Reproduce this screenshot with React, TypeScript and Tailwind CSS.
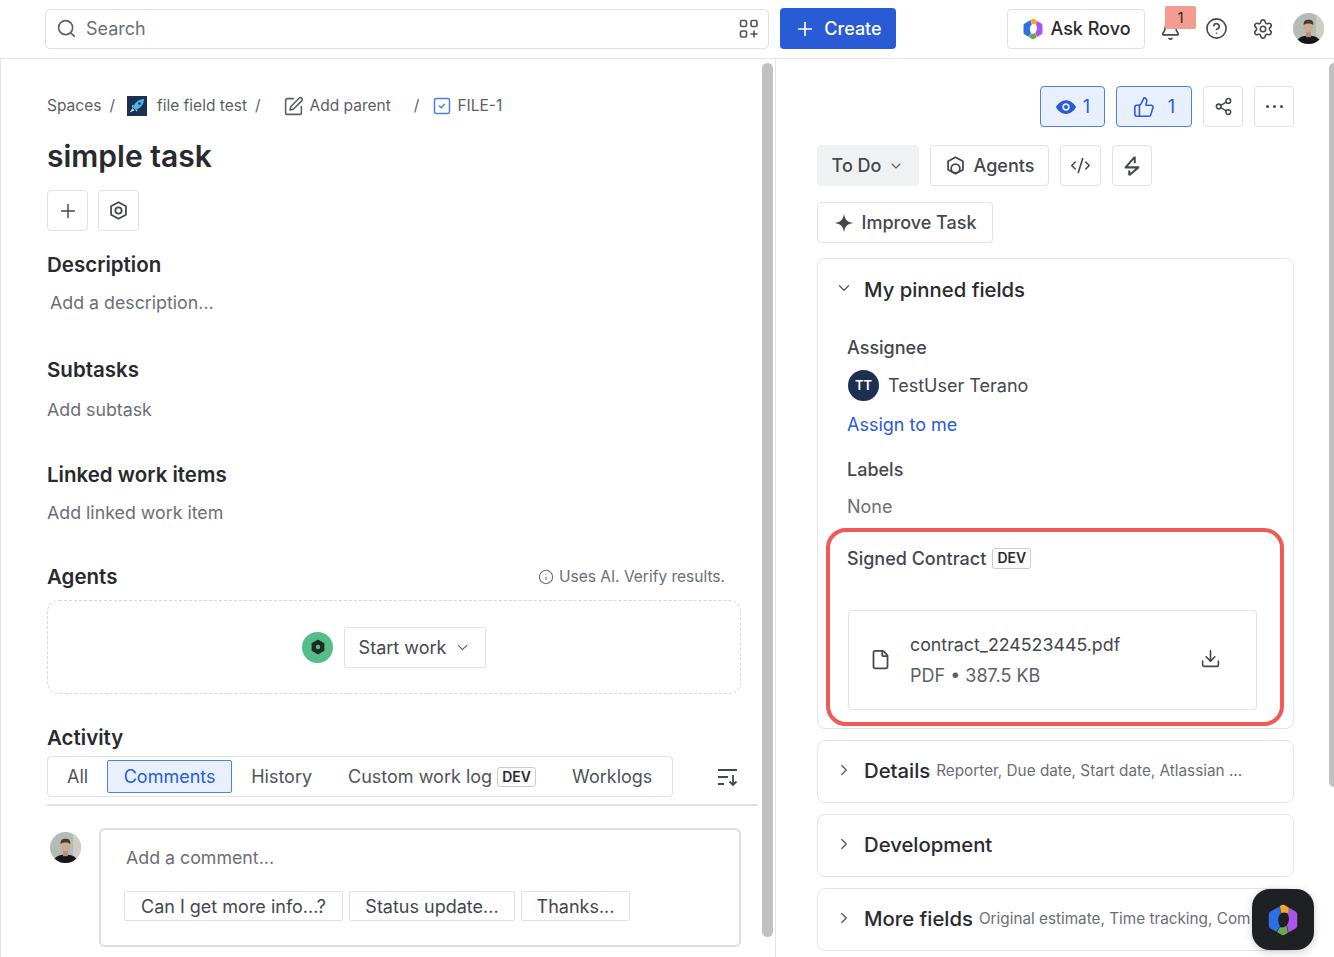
import { Bell, ChevronDown, ChevronRight, CircleHelp, CodeXml, Download, File, Info, Plus, Search, Settings, Share2, SquareCheck, SquarePen, ThumbsUp } from "lucide-react";

const FONT = "font-['Inter','Liberation_Sans',sans-serif]";

function RovoLogo({ size }: { size: number }) {
  return (
    <svg width={size} height={size} viewBox="0 0 24 24">
      <path d="M9.6 3 L3.6 6.4 Q2.5 7 2.5 8.4 V15.6 Q2.5 17 3.6 17.6 L7.6 19.8 L10 16.2 Q8.2 13 9 10 Q9.5 8.5 10.8 7.4Z" fill="#2f6fe4" />
      <path d="M9.8 2.9 L11 2 Q12 1.5 13 2 L15.8 3.6 L16 8 Q13.5 6.4 10.9 7.3Z" fill="#f5a623" />
      <path d="M16.2 3.9 L20.4 6.4 Q21.5 7 21.5 8.4 V15.6 Q21.5 17 20.4 17.6 L15.6 20.3 L14.6 15.2 Q15.8 14 16 11.5 Q16 9.5 15.2 8.2Z" fill="#a855e8" />
      <path d="M8 20 L10 16.6 Q12 17.6 14.3 15.6 L15.3 20.5 L13 21.9 Q12 22.5 11 21.9Z" fill="#6aa84f" />
    </svg>
  );
}

function Avatar({ className }: { className: string }) {
  return (
    <svg className={className} viewBox="0 0 32 32">
      <clipPath id="face-clip">
        <circle cx="16" cy="16" r="16" />
      </clipPath>
      <g clipPath="url(#face-clip)">
        <rect width="32" height="32" fill="#b4bcb8" />
        <rect x="24" width="8" height="32" fill="#cfccc4" />
        <path d="M3 32 C4 25 10 23.5 16 23.5 C22 23.5 28 25 29 32Z" fill="#15171a" />
        <rect x="13.5" y="18" width="5" height="7" fill="#b98f78" />
        <ellipse cx="16" cy="14" rx="4.8" ry="6" fill="#cfa892" />
        <path d="M11 12.5 C10.5 8 13 7 16 7 C19 7 21.5 8 21 12.5 C19.5 10.3 12.5 10.3 11 12.5Z" fill="#4a3b31" />
      </g>
    </svg>
  );
}

function AgentHex({ className }: { className: string }) {
  return (
    <svg className={className} viewBox="0 0 24 24" fill="none" stroke="currentColor" strokeWidth="2">
      <path d="M12 2.5 L20.5 7.2 V16.8 L12 21.5 L3.5 16.8 V7.2Z" strokeLinejoin="round" />
      <circle cx="12" cy="12" r="3.6" />
    </svg>
  );
}

function AgentsGlyph({ className }: { className: string }) {
  return (
    <svg className={className} viewBox="0 0 24 24" fill="none" stroke="currentColor" strokeWidth="2">
      <path d="M12 2.5 L20.5 7.2 V16.8 L12 21.5 L3.5 16.8 V7.2Z" strokeLinejoin="round" />
      <circle cx="12" cy="15.5" r="5" />
    </svg>
  );
}

function DevBadge({ className }: { className: string }) {
  return (
    <span className={`inline-flex items-center justify-center rounded-[3px] border border-[#c9cbd0] text-[14px] font-semibold leading-none text-[#292a2e] ${className}`}>
      DEV
    </span>
  );
}

function IconBox({ className, children }: { className: string; children: React.ReactNode }) {
  return <div className={`flex items-center justify-center rounded-[4px] border border-[#dfe1e4] bg-white text-[#44474e] ${className}`}>{children}</div>;
}

function CollapsedCard({ title, note, className }: { title: string; note?: string; className: string }) {
  return (
    <div className={`flex h-[63px] items-center overflow-hidden rounded-[8px] border border-[#e3e4e7] pl-[17px] ${className}`}>
      <ChevronRight className="mb-1 h-[18px] w-[18px] shrink-0 text-[#50535a]" strokeWidth={1.6} />
      <span className="ml-[11px] shrink-0 text-[20.3px] font-medium text-[#292a2e]">{title}</span>
      {note && <span className="ml-[6px] whitespace-nowrap text-[15.3px] text-[#6b6e76]">{note}</span>}
    </div>
  );
}

function Header() {
  return (
    <header className="flex h-[59px] items-center border-b border-[#e3e4e7] pb-[1px] pl-[45px] pr-[10px]">
      <div className="flex h-[40px] w-[724px] items-center rounded-[5px] border border-[#dfe1e4] pl-[10px] pr-[9px]">
        <Search className="h-[21px] w-[21px] text-[#5c5f66]" strokeWidth={1.8} />
        <span className="ml-[9px] text-[18px] text-[#6b6e76]">Search</span>
        <svg className="ml-auto h-[20px] w-[20px] text-[#50535a]" viewBox="0 0 20 20" fill="none" stroke="currentColor" strokeWidth="1.6">
          <rect x="1.5" y="1.5" width="6" height="6" rx="1.5" />
          <rect x="12" y="1.5" width="6" height="6" rx="1.5" />
          <rect x="1.5" y="12" width="6" height="6" rx="1.5" />
          <path d="M15 11.5v7M11.5 15h7" />
        </svg>
      </div>
      <div className="ml-[11px] flex h-[41px] w-[116px] items-center justify-center gap-[8px] rounded-[4px] bg-[#2a5bd7] text-[18px] font-medium text-white">
        <Plus className="h-[22px] w-[22px]" strokeWidth={1.8} />
        Create
      </div>
      <div className="ml-[111px] flex h-[40px] w-[138px] items-center justify-center gap-[5px] rounded-[4px] border border-[#dfe1e4] text-[18px] font-medium text-[#292a2e]">
        <RovoLogo size={24} />
        Ask Rovo
      </div>
      <div className="relative ml-[13px] flex h-[40px] w-[24px] items-center justify-center">
        <Bell className="mt-[3px] h-[21px] w-[21px] text-[#44474e]" strokeWidth={1.8} />
        <span className="absolute left-[7px] top-[-3px] flex h-[23px] w-[31px] items-center justify-center rounded-[2px] bg-[#f59c91] text-[15px] leading-none text-[#292a2e]">1</span>
      </div>
      <CircleHelp className="ml-[23px] h-[23px] w-[23px] text-[#44474e]" strokeWidth={1.7} />
      <Settings className="ml-[24px] h-[22px] w-[22px] text-[#44474e]" strokeWidth={1.7} />
      <Avatar className="ml-[19px] h-[31px] w-[31px]" />
    </header>
  );
}

function Section({ title, action, className }: { title: string; action: string; className: string }) {
  return (
    <>
      <h2 className={`h-[28px] text-[20.5px] font-semibold leading-[28px] text-[#292a2e] ${className}`}>{title}</h2>
      <p className="text-[17.8px] leading-[26px] text-[#6b6e76]">{action}</p>
    </>
  );
}

function TaskPanel() {
  return (
    <main className="relative h-[898px] w-[775px] shrink-0 overflow-hidden border-l border-[#e3e4e7] pl-[46px] pt-[34px]">
      <div className="flex h-[26px] items-center text-[15.5px] text-[#5c5f66]">
        <span>Spaces</span>
        <span className="ml-[8px]">/</span>
        <svg className="ml-[12px] h-[20px] w-[20px]" viewBox="0 0 20 20">
          <rect width="20" height="20" fill="#1d2f52" />
          <path d="M17 3 C12 3 7.5 6.5 6 11.5 L8.5 14 C13.5 12.5 17 8 17 3Z" fill="#4fb4e8" />
          <circle cx="12.5" cy="7.5" r="1.3" fill="#1d2f52" />
          <path d="M5.5 12 L2.5 16.5 L7.5 14.5Z M5 9.5 L7 9 L5.5 12Z M10.5 13.5 L10 15.5 L8.5 14.5Z" fill="#a9e1f7" />
        </svg>
        <span className="ml-[10px]">file field test</span>
        <span className="ml-[8px]">/</span>
        <SquarePen className="ml-[22px] h-[21px] w-[21px]" strokeWidth={1.8} />
        <span className="ml-[6px]">Add parent</span>
        <span className="ml-[23px]">/</span>
        <SquareCheck className="ml-[13px] h-[20px] w-[20px] text-[#4c7fe8]" strokeWidth={1.8} />
        <span className="ml-[5px]">FILE-1</span>
      </div>
      <h1 className="mt-[17px] h-[40px] text-[30px] font-semibold leading-[40px] text-[#292a2e]">simple task</h1>
      <div className="mt-[14px] flex gap-[10px]">
        <IconBox className="h-[41px] w-[41px]">
          <Plus className="h-[22px] w-[22px]" strokeWidth={1.6} />
        </IconBox>
        <IconBox className="h-[41px] w-[41px]">
          <AgentHex className="h-[21px] w-[21px]" />
        </IconBox>
      </div>
      <h2 className="mt-[20px] h-[28px] text-[20.5px] font-semibold leading-[28px] text-[#292a2e]">Description</h2>
      <p className="ml-[3px] mt-[11px] text-[17.8px] leading-[26px] text-[#6b6e76]">Add a description...</p>
      <div className="mt-[40px]">
        <Section title="Subtasks" action="Add subtask" className="mb-[13px]" />
      </div>
      <div className="mt-[38px]">
        <Section title="Linked work items" action="Add linked work item" className="mb-[11px]" />
      </div>
      <div className="mr-[34px] mt-[37px] flex h-[28px] items-center justify-between pr-[16px]">
        <h2 className="text-[20.5px] font-semibold text-[#292a2e]">Agents</h2>
        <span className="flex items-center gap-[5px] text-[15.5px] text-[#6b6e76]">
          <Info className="h-[16px] w-[16px]" strokeWidth={1.6} />
          Uses AI. Verify results.
        </span>
      </div>
      <div className="mr-[34px] mt-[9px] flex h-[94px] items-center justify-center gap-[11px] rounded-[12px] border border-dashed border-[#d4d6da]">
        <span className="flex h-[31px] w-[31px] items-center justify-center rounded-full bg-[#55bd8a] text-[#1f2a26]">
          <svg className="h-[18px] w-[18px]" viewBox="0 0 24 24" fill="currentColor" fillRule="evenodd">
            <path d="M12 2 L20.5 7 V17 L12 22 L3.5 17 V7Z M12 9 A3 3 0 1 0 12 15 A3 3 0 1 0 12 9Z" />
          </svg>
        </span>
        <div className="flex h-[41px] w-[142px] items-center justify-center gap-[8px] rounded-[3px] border border-[#dfe1e4] text-[18px] text-[#44474e]">
          Start work
          <ChevronDown className="h-[17px] w-[17px] text-[#5c5f66]" strokeWidth={1.6} />
        </div>
      </div>
      <h2 className="mt-[30px] h-[28px] text-[20.5px] font-semibold leading-[28px] text-[#292a2e]">Activity</h2>
      <div className="mt-[4px] flex items-center pr-[36px]">
        <div className="flex h-[41px] w-[626px] items-center rounded-[4px] border border-[#dfe1e4] pl-[4px] text-[18px] text-[#50535a]">
          <span className="ml-[15px]">All</span>
          <span className="ml-[19px] flex h-[33px] w-[125px] items-center justify-center rounded-[2px] border border-[#4c7fe8] bg-[#e9f0fd] text-[#2a5bd7]">Comments</span>
          <span className="ml-[19px]">History</span>
          <span className="ml-[36px]">Custom work log</span>
          <DevBadge className="ml-[5px] h-[20px] w-[39px]" />
          <span className="ml-[36px]">Worklogs</span>
        </div>
        <svg className="ml-[44px] h-[20px] w-[22px] text-[#44474e]" viewBox="0 0 22 20" fill="none" stroke="currentColor" strokeWidth="1.8">
          <path d="M1 3h19M1 10h10M1 17h6M16 8v10M12.5 14.5 16 18l3.5-3.5" />
        </svg>
      </div>
      <div className="mt-[7px] h-[2px] w-[711px] bg-[#dfe1e4]" />
      <div className="mr-[34px] mt-[22px] flex items-start">
        <Avatar className="ml-[3px] mt-[4px] h-[31px] w-[31px] shrink-0" />
        <div className="ml-[18px] h-[119px] grow rounded-[6px] border-2 border-[#dcdee1] pl-[25px] pt-[15px]">
          <p className="text-[17.8px] leading-[26px] text-[#6b6e76]">Add a comment...</p>
          <div className="ml-[-2px] mt-[20px] flex gap-[6px] text-[18px] text-[#44474e]">
            <span className="flex h-[30px] w-[219px] items-center justify-center rounded-[2px] border border-[#dfe1e4]">Can I get more info...?</span>
            <span className="flex h-[30px] w-[166px] items-center justify-center rounded-[2px] border border-[#dfe1e4]">Status update...</span>
            <span className="flex h-[30px] w-[109px] items-center justify-center rounded-[2px] border border-[#dfe1e4]">Thanks...</span>
          </div>
        </div>
      </div>
      <div className="absolute right-[2px] top-[4px] h-[874px] w-[11px] rounded-full bg-[#c1c1c1]" />
    </main>
  );
}

function SidePanel() {
  return (
    <aside className="relative h-[898px] grow overflow-hidden border-l border-[#e3e4e7] pl-[41px] pr-[40px] pt-[27px]">
      <div className="flex justify-end gap-[11px]">
        <div className="flex h-[41px] w-[65px] items-center justify-center gap-[6px] rounded-[4px] border border-[#4c7fe8] bg-[#e9f0fd] text-[18px] text-[#2a5bd7]">
          <svg className="h-[22px] w-[22px]" viewBox="0 0 24 24" fill="currentColor" fillRule="evenodd">
            <path d="M12 4.5 C6.5 4.5 2.5 9 1 12 C2.5 15 6.5 19.5 12 19.5 C17.5 19.5 21.5 15 23 12 C21.5 9 17.5 4.5 12 4.5Z M12 8 A4 4 0 1 0 12 16 A4 4 0 1 0 12 8Z" />
            <circle cx="12" cy="12" r="2.2" />
          </svg>
          1
        </div>
        <div className="flex h-[41px] w-[76px] items-center justify-center gap-[13px] rounded-[4px] border border-[#4c7fe8] bg-[#e9f0fd] text-[18px] text-[#2a5bd7]">
          <ThumbsUp className="h-[22px] w-[22px]" strokeWidth={1.7} />
          1
        </div>
        <IconBox className="h-[41px] w-[40px]">
          <Share2 className="h-[19px] w-[19px]" strokeWidth={1.9} />
        </IconBox>
        <IconBox className="h-[41px] w-[40px] gap-[4px]">
          <span className="h-[3px] w-[3px] rounded-full bg-[#44474e]" />
          <span className="h-[3px] w-[3px] rounded-full bg-[#44474e]" />
          <span className="h-[3px] w-[3px] rounded-full bg-[#44474e]" />
        </IconBox>
      </div>
      <div className="mt-[18px] flex gap-[11px] text-[18px] font-medium text-[#44474e]">
        <div className="flex h-[41px] w-[102px] items-center justify-center gap-[7px] rounded-[4px] bg-[#f0f1f2]">
          To Do
          <ChevronDown className="h-[16px] w-[16px] text-[#5c5f66]" strokeWidth={1.6} />
        </div>
        <IconBox className="h-[41px] w-[119px] gap-[8px]">
          <AgentsGlyph className="h-[21px] w-[21px]" />
          Agents
        </IconBox>
        <IconBox className="h-[41px] w-[41px]">
          <CodeXml className="h-[21px] w-[21px]" strokeWidth={1.8} />
        </IconBox>
        <IconBox className="h-[41px] w-[40px]">
          <svg className="h-[22px] w-[22px]" viewBox="0 0 24 24" fill="none" stroke="currentColor" strokeWidth="2.2" strokeLinejoin="round">
            <path d="M15 2 L5 13.5 H19 L9 22 M15 2 V9 M9 22 V17" />
          </svg>
        </IconBox>
      </div>
      <IconBox className="mt-[16px] h-[41px] w-[176px] gap-[8px] text-[18px] font-medium">
        <svg className="h-[20px] w-[20px]" viewBox="0 0 24 24" fill="currentColor">
          <path d="M12 1 C13 8 16 11 23 12 C16 13 13 16 12 23 C11 16 8 13 1 12 C8 11 11 8 12 1Z" />
        </svg>
        Improve Task
      </IconBox>
      <section className="mt-[15px] h-[471px] rounded-[8px] border border-[#e3e4e7]">
        <div className="flex h-[62px] items-center pl-[17px]">
          <ChevronDown className="mb-1 h-[18px] w-[18px] text-[#50535a]" strokeWidth={1.6} />
          <span className="ml-[11px] text-[20.3px] font-medium text-[#292a2e]">My pinned fields</span>
        </div>
        <div className="pl-[29px] text-[18px]">
          <p className="mt-[14px] h-[26px] font-medium leading-[26px] text-[#44474e]">Assignee</p>
          <div className="mt-[9px] flex h-[31px] items-center gap-[9px] text-[#44474e]">
            <span className="ml-[1px] flex h-[31px] w-[31px] items-center justify-center rounded-full bg-[#1d2f52] text-[13px] font-semibold text-white">TT</span>
            TestUser Terano
          </div>
          <p className="mt-[11px] h-[26px] leading-[26px] text-[#2a5bd7]">Assign to me</p>
          <p className="mt-[19px] h-[26px] font-medium leading-[26px] text-[#44474e]">Labels</p>
          <p className="mt-[11px] h-[26px] leading-[26px] text-[#6b6e76]">None</p>
          <div className="mt-[25px] flex h-[26px] items-center gap-[6px] font-medium text-[#44474e]">
            Signed Contract
            <DevBadge className="h-[21px] w-[39px]" />
          </div>
          <div className="ml-[1px] mr-[36px] mt-[39px] flex h-[100px] items-center rounded-[4px] border border-[#dfe1e4] pl-[21px] pr-[35px] text-[#44474e]">
            <File className="mb-[1px] h-[21px] w-[21px]" strokeWidth={2} />
            <div className="ml-[19px] grow">
              <p className="text-[17.8px] leading-[31px]">contract_224523445.pdf</p>
              <p className="leading-[31px] text-[#5c5f66]">PDF • 387.5 KB</p>
            </div>
            <Download className="mb-[3px] h-[21px] w-[21px]" strokeWidth={1.8} />
          </div>
        </div>
      </section>
      <CollapsedCard className="mt-[11px]" title="Details" note="Reporter, Due date, Start date, Atlassian ..." />
      <CollapsedCard className="mt-[11px]" title="Development" />
      <CollapsedCard className="mt-[11px]" title="More fields" note="Original estimate, Time tracking, Com" />
      <div className="absolute right-0 top-[4px] h-[724px] w-[5px] rounded-l-full bg-[#c1c1c1]" />
    </aside>
  );
}

export default function App() {
  return (
    <div className={`relative h-[957px] w-[1334px] overflow-hidden bg-white ${FONT}`}>
      <Header />
      <div className="flex">
        <TaskPanel />
        <SidePanel />
      </div>
      {/* red callout and floating button sit over the panels */}
      <div className="absolute left-[826px] top-[528px] h-[198px] w-[458px] rounded-[20px] border-[4px] border-[#ef5a55]" />
      <div className="absolute left-[1252px] top-[889px] flex h-[61px] w-[62px] items-center justify-center rounded-[18px] bg-[#1f2024] shadow-[0_2px_8px_rgba(0,0,0,0.2)]">
        <RovoLogo size={36} />
      </div>
    </div>
  );
}
